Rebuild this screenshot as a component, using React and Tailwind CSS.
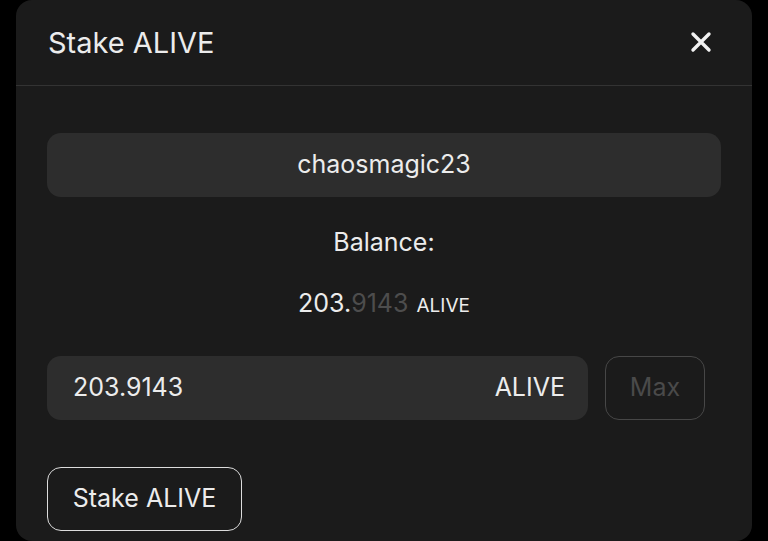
export default function App() {
  return (
    <div className="w-[768px] h-[541px] bg-black overflow-hidden" style={{ fontFamily: "Inter, 'Noto Sans', sans-serif" }}>
      <div className="mx-[16px] h-[541px] bg-[#1b1b1b] rounded-[16px] flex flex-col text-[#ececec]">
        <div className="h-[86px] border-b border-[#333333] flex items-center justify-between pl-[32px] pr-[40px] shrink-0">
          <div className="text-[29px] leading-none pb-[1px]">Stake ALIVE</div>
          <svg width="22" height="22" viewBox="0 0 22 22" className="mt-[-2px]">
            <path d="M3 3 L19 19 M19 3 L3 19" stroke="#f2f2f2" strokeWidth="3.4" strokeLinecap="round" />
          </svg>
        </div>
        <div className="px-[31px] pt-[47px] flex flex-col">
          <div className="h-[64px] rounded-[14px] bg-[#2d2d2d] flex items-center justify-center text-[25px]">
            chaosmagic23
          </div>
          <div className="mt-[30px] h-[32px] flex items-center justify-center text-[25px]">Balance:</div>
          <div className="mt-[28px] h-[32px] flex items-baseline justify-center text-[25px] leading-[32px]">
            <span>203.</span>
            <span className="text-[#4d4d4d]">9143</span>
            <span className="text-[19px] ml-[8px]">ALIVE</span>
          </div>
          <div className="mt-[37px] flex gap-[17px] pr-[16px]">
            <div className="flex-1 h-[64px] rounded-[14px] bg-[#2d2d2d] flex items-center justify-between pl-[26px] pr-[23px] text-[25px]">
              <span>203.9143</span>
              <span>ALIVE</span>
            </div>
            <div className="w-[100px] h-[64px] rounded-[14px] border border-[#474747] flex items-center justify-center text-[25px] text-[#4a4a4a]">
              Max
            </div>
          </div>
          <div className="mt-[47px]">
            <div className="w-[195px] h-[64px] rounded-[14px] border-[1.5px] border-[#dcdcdc] flex items-center justify-center text-[25px]">
              Stake ALIVE
            </div>
          </div>
        </div>
      </div>
    </div>
  );
}
